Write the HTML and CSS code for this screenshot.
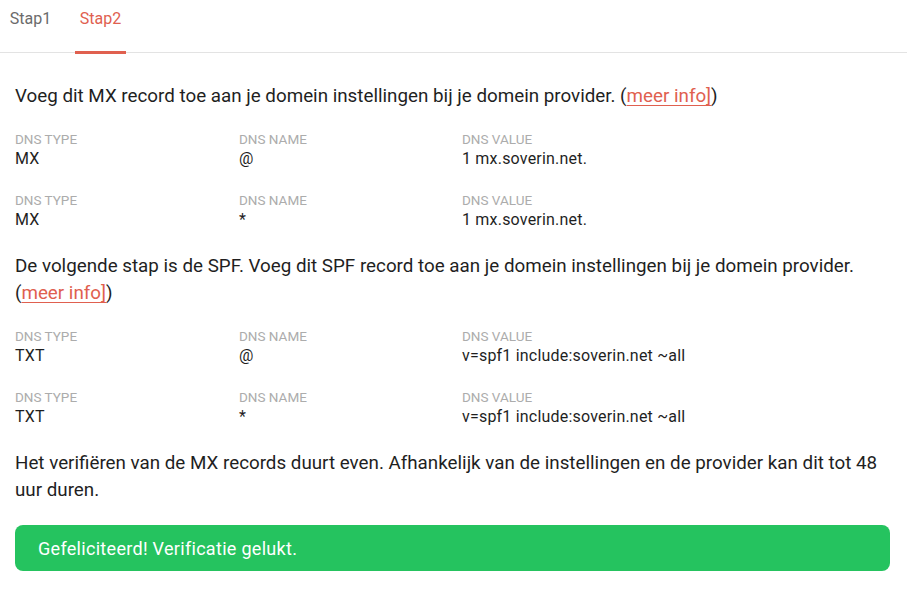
FILE: index.html
```html
<!DOCTYPE html>
<html lang="nl">
<head>
    <meta charset="UTF-8">
    <meta name="viewport" content="width=device-width, initial-scale=1.0">
    <title>Domein verificatie</title>
    <link rel="stylesheet" href="styles.css">
</head>
<body>
    <div class="tabs">
        <div class="tab">Stap1</div>
        <div class="tab active">Stap2</div>
    </div>

    <div class="content">
        <p>Voeg dit MX record toe aan je domein instellingen bij je domein provider. (<a href="#" class="info-link">meer info]</a>)</p>

        <div class="record">
            <div class="field"><span class="label">DNS TYPE</span><span class="value">MX</span></div>
            <div class="field"><span class="label">DNS NAME</span><span class="value">@</span></div>
            <div class="field"><span class="label">DNS VALUE</span><span class="value">1 mx.soverin.net.</span></div>
        </div>
        <div class="record">
            <div class="field"><span class="label">DNS TYPE</span><span class="value">MX</span></div>
            <div class="field"><span class="label">DNS NAME</span><span class="value">*</span></div>
            <div class="field"><span class="label">DNS VALUE</span><span class="value">1 mx.soverin.net.</span></div>
        </div>

        <p>De volgende stap is de SPF. Voeg dit SPF record toe aan je domein instellingen bij je domein provider. (<a href="#" class="info-link">meer info]</a>)</p>

        <div class="record">
            <div class="field"><span class="label">DNS TYPE</span><span class="value">TXT</span></div>
            <div class="field"><span class="label">DNS NAME</span><span class="value">@</span></div>
            <div class="field"><span class="label">DNS VALUE</span><span class="value">v=spf1 include:soverin.net ~all</span></div>
        </div>
        <div class="record">
            <div class="field"><span class="label">DNS TYPE</span><span class="value">TXT</span></div>
            <div class="field"><span class="label">DNS NAME</span><span class="value">*</span></div>
            <div class="field"><span class="label">DNS VALUE</span><span class="value">v=spf1 include:soverin.net ~all</span></div>
        </div>

        <p>Het verifiëren van de MX records duurt even. Afhankelijk van de instellingen en de provider kan dit tot 48 uur duren.</p>

        <div class="alert-success">Gefeliciteerd! Verificatie gelukt.</div>
    </div>
</body>
</html>
```

FILE: styles.css
```css
:root {
    --text-color: #1f1f1f;
    --muted-color: #acacac;
    --accent-color: #e0604f;
    --success-color: #25c35f;
    --border-color: #e3e3e3;
}

* {
    margin: 0;
    padding: 0;
    box-sizing: border-box;
}

body {
    font-family: 'Roboto', 'Liberation Sans', sans-serif;
    color: var(--text-color);
    background: #fff;
}

.tabs {
    display: flex;
    gap: 19px;
    height: 53px;
    padding-left: 5px;
    border-bottom: 1px solid var(--border-color);
}

.tab {
    width: 51px;
    padding-top: 7px;
    height: 54px;
    font-size: 16px;
    line-height: 24px;
    text-align: center;
    color: #6b6b6b;
    border-bottom: 3px solid transparent;
}

.tab.active {
    color: var(--accent-color);
    border-bottom-color: var(--accent-color);
}

.content {
    padding: 7px 15px 0;
}

p {
    font-size: 18.8px;
    line-height: 27px;
    margin: 23px 0 19px;
}

.info-link {
    color: var(--accent-color);
    text-decoration: underline;
    text-decoration-thickness: 1px;
    text-underline-offset: 3px;
}

.record {
    display: grid;
    grid-template-columns: 224px 223px 1fr;
    margin-bottom: 21px;
}

.field {
    display: flex;
    flex-direction: column;
}

.label {
    font-size: 13.5px;
    line-height: 20px;
    color: var(--muted-color);
}

.value {
    font-size: 16px;
    line-height: 20px;
    letter-spacing: 0.2px;
}

.alert-success {
    margin-top: 21px;
    width: 875px;
    height: 46px;
    padding: 0 23px;
    display: flex;
    align-items: center;
    background: var(--success-color);
    border-radius: 8px;
    color: #fff;
    font-size: 18px;
    letter-spacing: 0.3px;
}
```
